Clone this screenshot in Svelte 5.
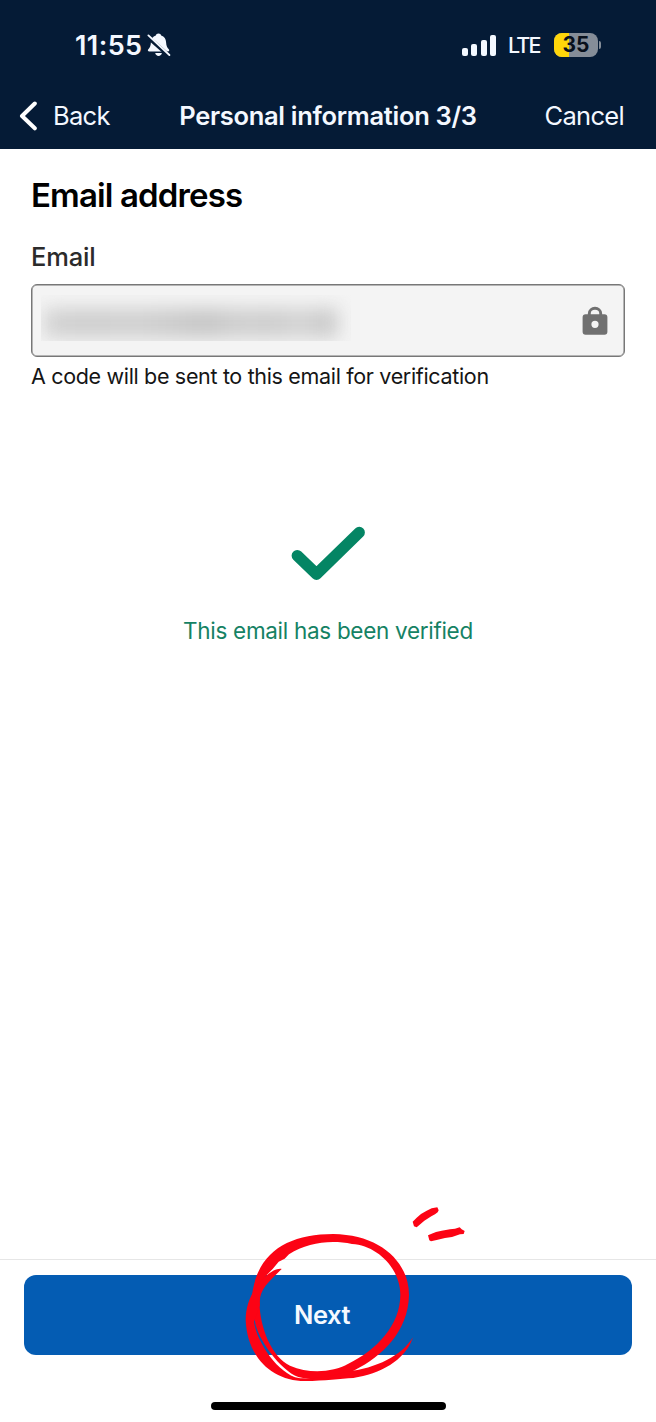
<script lang="ts">
	const time = '11:55';
	const network = 'LTE';
	const battery = 35;
	const step = 3;
	const steps = 3;

	// signal bar heights, weakest first
	const bars = [8, 12, 16, 21];
</script>

<div class="screen">
	<header>
		<div class="status">
			<div class="clock">
				<span class="time">{time}</span>
				<svg class="bell" width="24" height="26" viewBox="0 0 24 26" aria-hidden="true">
					<path
						d="M11.5 1.5c1.5 0 2.4.9 2.7 2.1 3.2 1 4.7 3.5 4.9 7 .2 3.6 1 5 2.7 6.7.9 1 .4 2.2-1 2.2H2.3c-1.4 0-1.9-1.2-1-2.2 1.7-1.7 2.4-3.1 2.6-6.7.2-3.5 1.8-6 4.9-7 .3-1.2 1.2-2.1 2.7-2.1zM8.2 21h6.7c-.3 1.7-1.6 2.9-3.3 2.9S8.5 22.7 8.2 21z"
						fill="#f4f8ff"
					/>
					<path d="M0 4.3 22.5 24.2" stroke="#051b36" stroke-width="4" />
					<path d="M1.4 3.4 22.4 23" stroke="#f4f8ff" stroke-width="1.9" stroke-linecap="round" />
				</svg>
			</div>
			<div class="indicators">
				<div class="signal">
					{#each bars as height}
						<i style:height="{height}px"></i>
					{/each}
				</div>
				<span class="network">{network}</span>
				<div class="battery">
					<div class="level" style:width="{battery}%"></div>
					<span>{battery}</span>
				</div>
				<i class="battery-cap"></i>
			</div>
		</div>
		<nav>
			<button class="back">
				<svg width="19" height="30" viewBox="0 0 19 30" aria-hidden="true">
					<path d="M15.8 2.5 3 15 15.8 27.3" fill="none" stroke="#fff" stroke-width="4" stroke-linecap="round" stroke-linejoin="round" />
				</svg>
				<span>Back</span>
			</button>
			<span class="title">Personal information {step}/{steps}</span>
			<button class="cancel">Cancel</button>
		</nav>
	</header>

	<main>
		<h1>Email address</h1>
		<div class="label">Email</div>
		<div class="field">
			<div class="masked"><i></i></div>
			<svg width="26" height="30" viewBox="0 0 26 30" aria-hidden="true">
				<path d="M7.3 10V7.5a5.7 5.2 0 0 1 11.4 0V10" fill="none" stroke="#707070" stroke-width="2.9" />
				<path
					d="M3.6 8.3h18.8a3 3 0 0 1 3 3v14.4a3 3 0 0 1-3 3H3.6a3 3 0 0 1-3-3V11.3a3 3 0 0 1 3-3zM13 14.7a3.6 3.6 0 1 0 0 7.2 3.6 3.6 0 0 0 0-7.2z"
					fill="#707070"
					fill-rule="evenodd"
				/>
			</svg>
		</div>
		<p class="hint">A code will be sent to this email for verification</p>

		<div class="verified">
			<svg width="76" height="56" viewBox="0 0 76 56" aria-hidden="true">
				<path d="M7.3 30.7 26.5 49.2 69.2 7.5" fill="none" stroke="#048564" stroke-width="11.4" stroke-linecap="round" stroke-linejoin="round" />
			</svg>
			<p>This email has been verified</p>
		</div>
	</main>

	<footer>
		<button class="next">Next</button>
		<svg class="marker" width="250" height="200" viewBox="0 0 750 600" aria-hidden="true">
			<g fill="#fc0314">
				<path
					fill-rule="evenodd"
					d="M64 330C68 180 165 117 310 117C450 119 537 200 537 300C535 410 455 485 375 525C320 554 260 560 205 546C150 525 82 430 75 380ZM88 320C90 400 125 485 180 512C240 538 310 531 355 506C440 465 511 390 511 299C510 218 440 151 366 147C300 134 233 143 177 178L164 191L146 200L128 222L110 240C92 265 86 290 88 320Z"
				/>
				<path
					d="M155 222C145 220 128 226 112 239C70 275 47 325 47 375C51 485 125 558 225 558C285 558 330 551 370 549C450 537 525 498 549 427C515 482 440 520 350 530C290 547 230 556 195 547C130 520 78 430 72 380L90 330C85 285 115 262 155 222Z"
				/>
				<path d="M548 80L560 68L573 57L590 47L605 40L622 37L626 46L623 52L615 58L604 64L583 77L569 89L560 97L552 94Z" />
				<path d="M594 121L605 116L618 111L635 107L660 103L675 101L689 97L695 103L704 108L701 117L690 118L666 126L645 129L620 135L603 139L598 136Z" />
			</g>
		</svg>
		<div class="home-bar"></div>
	</footer>
</div>

<style>
	:global(body) {
		margin: 0;
		background: #fff;
	}

	.screen {
		display: flex;
		flex-direction: column;
		width: 656px;
		height: 1422px;
		overflow: hidden;
		font-family: Inter, 'Liberation Sans', sans-serif;
		color: #000;
		background: #fff;
	}

	button {
		padding: 0;
		border: 0;
		background: none;
		color: inherit;
		font: inherit;
		letter-spacing: inherit;
	}

	h1,
	p {
		margin: 0;
	}

	svg {
		display: block;
		flex: none;
	}

	header {
		box-sizing: border-box;
		height: 149px;
		background: #051b36;
		color: #f4f8ff;
	}

	.status {
		display: flex;
		justify-content: space-between;
		align-items: center;
		height: 90px;
		padding: 0 55px 0 75px;
	}

	.clock,
	.indicators,
	.signal {
		display: flex;
		align-items: center;
	}

	.time {
		width: 72px;
		font-size: 27px;
		font-weight: 600;
		letter-spacing: 0.4px;
	}

	.signal {
		align-items: flex-end;
		gap: 3.5px;
		margin-right: 12px;
	}

	.signal i {
		width: 6px;
		border-radius: 2px;
		background: #f4f8ff;
	}

	.network {
		width: 46px;
		font-size: 21.5px;
		font-weight: 500;
		letter-spacing: -1.8px;
	}

	.battery {
		position: relative;
		width: 44px;
		height: 24px;
		border-radius: 8px;
		overflow: hidden;
		background: #858d98;
		color: #08101c;
		font-size: 21px;
		font-weight: 700;
		line-height: 24px;
		text-align: center;
	}

	.level {
		position: absolute;
		inset: 0 auto 0 0;
		background: #ffd60a;
	}

	.battery span {
		position: relative;
	}

	.battery-cap {
		width: 2px;
		height: 8px;
		margin-left: 1px;
		border-radius: 0 3px 3px 0;
		background: #858d98;
	}

	nav {
		display: grid;
		grid-template-columns: 160px 336px 1fr;
		align-items: center;
		height: 51px;
		font-size: 25.5px;
	}

	.back {
		display: flex;
		align-items: center;
		gap: 15px;
		padding-left: 19px;
		letter-spacing: -0.7px;
	}

	.title {
		text-align: center;
		font-weight: 600;
		letter-spacing: -0.3px;
		white-space: nowrap;
	}

	.cancel {
		padding-right: 32px;
		letter-spacing: -0.7px;
		text-align: right;
	}

	main {
		flex: 1;
		padding: 26px 31px 0;
	}

	h1 {
		height: 41px;
		font-size: 33px;
		font-weight: 600;
		line-height: 41px;
		letter-spacing: -0.87px;
	}

	.label {
		height: 32px;
		margin-top: 25px;
		color: #2b2b2b;
		font-size: 25.5px;
		font-weight: 500;
		line-height: 32px;
		letter-spacing: -0.2px;
	}

	.field {
		box-sizing: border-box;
		display: flex;
		justify-content: space-between;
		align-items: center;
		height: 73px;
		margin-top: 11px;
		padding: 0 16px 0 9px;
		border: 1px solid #777;
		border-radius: 6px;
		box-shadow: inset 0 0 0 0.5px #777;
		background: #f4f4f4;
	}

	.masked {
		width: 310px;
		height: 46px;
		margin-top: -6px;
		overflow: hidden;
	}

	.masked i {
		display: block;
		width: 295px;
		height: 30px;
		margin: 13px 0 0 3px;
		background: linear-gradient(90deg, #d3d3d3, #cecece 15%, #d1d1d1 30%, #cbcbcb 45%, #c6c6c6 55%, #cfcfcf 65%, #cecece 80%, #d5d5d5 87%, #cbcbcb 94%, #d0d0d0);
		filter: blur(9px);
	}

	.hint {
		margin-top: 4px;
		color: #151515;
		font-size: 21.5px;
		line-height: 30px;
		letter-spacing: -0.33px;
	}

	.verified {
		display: flex;
		flex-direction: column;
		align-items: center;
		margin-top: 134px;
		color: #158264;
		font-size: 22.5px;
		line-height: 30px;
		letter-spacing: -0.3px;
	}

	.verified p {
		margin-top: 35px;
	}

	footer {
		position: relative;
		box-sizing: border-box;
		height: 163px;
		padding: 15px 24px 0;
		border-top: 1px solid #e6e6e6;
	}

	.next {
		display: block;
		width: 100%;
		height: 80px;
		padding: 0 12px 1px 0;
		border-radius: 12px;
		background: #045cb3;
		color: #f5f9ff;
		font-size: 25.5px;
		font-weight: 600;
		letter-spacing: -0.5px;
	}

	/* hand-drawn highlight over the button */
	.marker {
		position: absolute;
		top: -65px;
		left: 230px;
		pointer-events: none;
	}

	.home-bar {
		width: 235px;
		height: 8px;
		margin: 47px auto 0;
		border-radius: 4px;
		background: #000;
	}
</style>
